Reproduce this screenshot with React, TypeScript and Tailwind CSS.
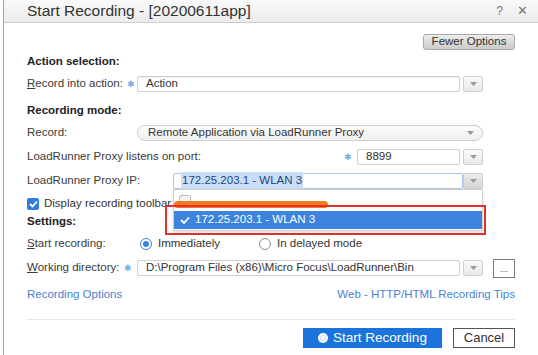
import React from 'react'

const font = { fontFamily: '"Liberation Sans", Arial, sans-serif' }

function Caret() {
  return (
    <svg width="7" height="4" viewBox="0 0 7 4">
      <path d="M0 0 L7 0 L3.5 4 Z" fill="#9a9a9a" />
    </svg>
  )
}

function DropButton({ dark = false }: { dark?: boolean }) {
  return (
    <div
      className={`flex h-[16px] w-[20px] shrink-0 items-center justify-center rounded-[2px] border border-[#cfcfcf] ${
        dark ? 'bg-gradient-to-b from-[#ececec] to-[#d4d4d4]' : 'bg-gradient-to-b from-[#fafafa] to-[#e9e9e9]'
      }`}
    >
      <Caret />
    </div>
  )
}

function Star() {
  return <span className="text-[9px] leading-none text-[#79aee6]">✱</span>
}

function Label({ children, w = 'w-[110px]' }: { children: React.ReactNode; w?: string }) {
  return <div className={`${w} shrink-0 text-[11.5px] text-[#3a3a3a]`}>{children}</div>
}

function Heading({ children }: { children: React.ReactNode }) {
  return <div className="flex h-[16px] items-center text-[11.5px] font-bold text-[#222]">{children}</div>
}

export default function App() {
  return (
    <div className="relative h-[355px] w-[538px] overflow-hidden bg-white pl-[3px]" style={font}>
      <div className="flex h-full flex-col border-l border-[#a3a3a3]">
        {/* title bar */}
        <div className="flex h-[23px] shrink-0 items-center border-b border-[#cdcdcd] bg-gradient-to-b from-[#f9f9f9] to-[#ececec] pl-[23px] pr-[10px]">
          <div className="flex-1 text-[15.5px] text-[#333]">Start Recording - [20200611app]</div>
          <span className="mr-[14px] text-[12px] text-[#777]">?</span>
          <span className="text-[13px] text-[#777]">✕</span>
        </div>

        <div className="flex flex-col pl-[23px] pr-[23px]">
          <div className="mt-[11px] flex justify-end">
            <div className="flex h-[16px] w-[92px] items-center justify-center rounded-[3px] border border-[#a9a9a9] bg-gradient-to-b from-[#ececec] to-[#cbcbcb] text-[11.5px] text-[#333]">
              Fewer Options
            </div>
          </div>

          <div className="mt-[4px]">
            <Heading>Action selection:</Heading>
          </div>

          <div className="mr-[32px] mt-[6px] flex h-[16px] items-center">
            <Label>
              <span className="flex items-center gap-[4px]">
                <span>
                  <span className="underline">R</span>ecord into action:
                </span>
                <Star />
              </span>
            </Label>
            <div className="flex h-[16px] flex-1 items-center rounded-[2px] border border-[#cfcfcf] pl-[8px] text-[11.5px] text-[#333] shadow-[inset_0_1px_1px_rgba(0,0,0,0.06)]">
              Action
            </div>
            <div className="ml-[3px]">
              <DropButton />
            </div>
          </div>

          <div className="mt-[11px]">
            <Heading>Recording mode:</Heading>
          </div>

          <div className="mr-[32px] mt-[6px] flex h-[16px] items-center">
            <Label>Record:</Label>
            <div className="flex h-[16px] flex-1 items-center justify-between rounded-full border border-[#cdcdcd] bg-gradient-to-b from-[#fdfdfd] to-[#efefef] pl-[10px] pr-[8px] text-[11.5px] text-[#333]">
              <span>Remote Application via LoadRunner Proxy</span>
              <Caret />
            </div>
          </div>

          <div className="mr-[32px] mt-[8px] flex h-[16px] items-center">
            <div className="flex-1 text-[11.5px] text-[#3a3a3a]">LoadRunner Proxy listens on port:</div>
            <Star />
            <div className="ml-[5px] flex h-[16px] w-[103px] items-center rounded-[2px] border border-[#cfcfcf] pl-[8px] text-[11.5px] text-[#333]">
              8899
            </div>
            <div className="ml-[3px]">
              <DropButton />
            </div>
          </div>

          <div className="mr-[32px] mt-[8px] flex h-[16px] items-center">
            <Label w="w-[146px]">LoadRunner Proxy IP:</Label>
            <div className="flex h-[16px] flex-1 items-center rounded-l-[2px] border border-[#a9c6ec] pl-[7px] text-[11.5px]">
              <span className="bg-[#c9def6] px-[1px] text-[#24467c]">172.25.203.1 - WLAN 3</span>
            </div>
            <DropButton dark />
          </div>

          <div className="mt-[7px] flex h-[16px] items-center gap-[5px]">
            <div className="flex h-[12px] w-[12px] items-center justify-center rounded-[2px] bg-[#2f7de0]">
              <svg width="9" height="8" viewBox="0 0 9 8">
                <path d="M1 4 L3.5 6.5 L8 1.5" stroke="#fff" strokeWidth="1.8" fill="none" />
              </svg>
            </div>
            <span className="text-[11.5px] text-[#333]">Display recording toolbar on client machine</span>
          </div>

          <div className="mt-[2px]">
            <Heading>Settings:</Heading>
          </div>

          <div className="mt-[6px] flex h-[16px] items-center">
            <Label w="w-[113px]">
              <span className="underline">S</span>tart recording:
            </Label>
            <div className="flex h-[12px] w-[12px] items-center justify-center rounded-full border border-[#3a82dc]">
              <div className="h-[6px] w-[6px] rounded-full bg-[#3a82dc]" />
            </div>
            <span className="ml-[6px] w-[101px] text-[11.5px] text-[#333]">Immediately</span>
            <div className="h-[12px] w-[12px] rounded-full border border-[#8a8a8a]" />
            <span className="ml-[6px] text-[11.5px] text-[#333]">In delayed mode</span>
          </div>

          <div className="mt-[8px] flex h-[16px] items-center">
            <Label>
              <span className="flex items-center gap-[5px]">
                <span>
                  <span className="underline">W</span>orking directory:
                </span>
                <Star />
              </span>
            </Label>
            <div className="flex h-[16px] flex-1 items-center rounded-[2px] border border-[#cfcfcf] pl-[8px] text-[11.5px] text-[#333]">
              D:\Program Files (x86)\Micro Focus\LoadRunner\Bin
            </div>
            <div className="ml-[3px]">
              <DropButton />
            </div>
            <div className="ml-[10px] flex h-[19px] w-[22px] items-end justify-center border border-[#7d7d7d] pb-[3px] text-[9px] leading-none text-[#444]">
              ...
            </div>
          </div>

          <div className="mt-[11px] flex h-[16px] items-center justify-between text-[11.5px] text-[#4a7fd3]">
            <span>Recording Options</span>
            <span>Web - HTTP/HTML Recording Tips</span>
          </div>

          <div className="mt-[16px] border-t border-[#e6e6e6]" />

          <div className="mt-[8px] flex justify-end gap-[11px]">
            <div className="flex h-[20px] w-[139px] items-center justify-center gap-[5px] bg-[#1b74dc] text-[13.5px] text-white">
              <div className="flex h-[10px] w-[10px] items-center justify-center rounded-full bg-white">
                <div className="h-[6px] w-[6px] rounded-full border border-[#c9ddf6] bg-white" />
              </div>
              <span>Start Recording</span>
            </div>
            <div className="flex h-[20px] w-[62px] items-center justify-center border border-[#555] bg-white text-[13px] text-[#333]">
              Cancel
            </div>
          </div>
        </div>
      </div>

      {/* open IP dropdown */}
      <div className="absolute left-[173px] top-[189px] h-[42px] w-[310px] border border-[#d0d0d0] bg-white shadow-[0_2px_3px_rgba(0,0,0,0.12)]">
        <div className="relative h-[20px]">
          <div className="absolute left-[5px] top-[5px] h-[10px] w-[12px] rounded-[2px] border border-[#bdbdbd] bg-[#f3f3f3]" />
          <div className="absolute left-0 top-[11px] h-[7px] w-[154px] rounded-full bg-[#f47b22]" />
        </div>
        <div className="mt-[1px] flex h-[18px] items-center gap-[5px] bg-[#3d84df] pl-[6px] text-[11.5px] text-white">
          <svg width="10" height="8" viewBox="0 0 10 8">
            <path d="M1 4 L4 7 L9 1.5" stroke="#fff" strokeWidth="1.8" fill="none" />
          </svg>
          <span>172.25.203.1 - WLAN 3</span>
        </div>
      </div>

      {/* annotation box */}
      <div className="absolute left-[165px] top-[205px] h-[30px] w-[321px] border-2 border-[#e0322c]" />
    </div>
  )
}
